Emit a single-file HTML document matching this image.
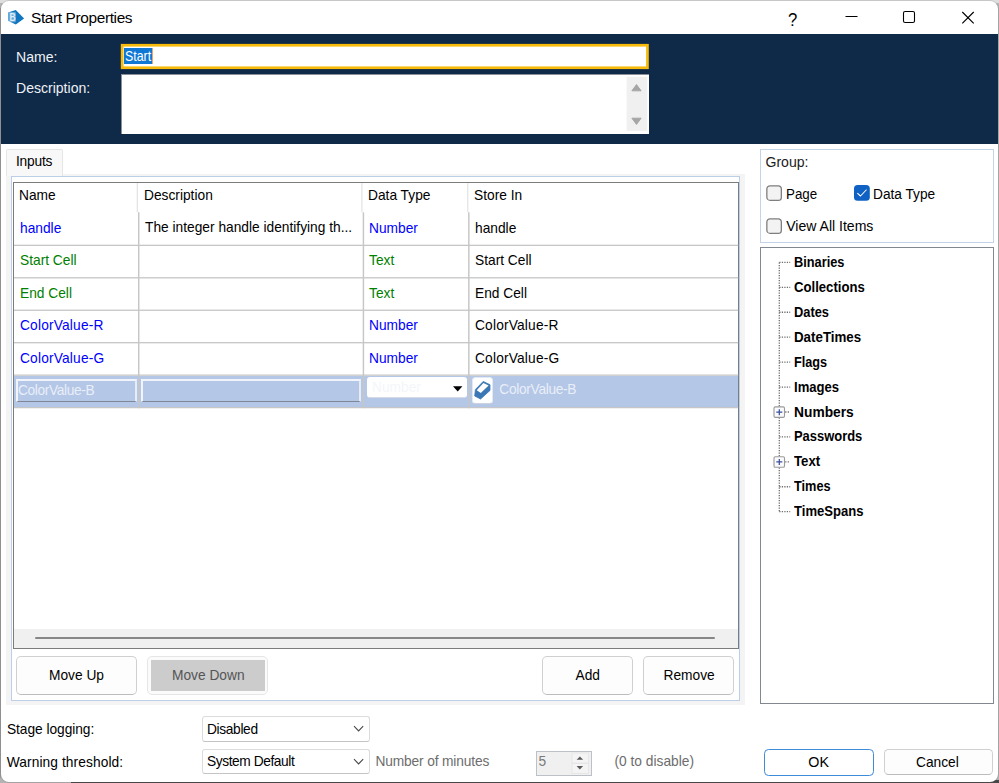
<!DOCTYPE html>
<html><head><meta charset="utf-8"><title>Start Properties</title>
<style>
*{box-sizing:border-box;margin:0;padding:0}
html,body{width:999px;height:783px;overflow:hidden;background:#5a5a5a;font-family:"Liberation Sans",sans-serif;}
#bg{position:absolute;left:0;top:0;width:999px;height:783px;background:linear-gradient(#dedede 0,#dedede 3px,#b4b4b4 3px,#b4b4b4 100%);}
#bg2{position:absolute;left:71px;top:780px;width:928px;height:3px;background:#474747}
#bg3{position:absolute;left:0;top:8px;width:1px;height:770px;background:#9c9c9c}
#win{position:absolute;left:1px;top:1px;width:996.7px;height:781px;background:#fff;border-radius:8px;overflow:hidden;box-shadow:0 0 0 1px rgba(80,80,80,.16);}
.a{position:absolute}
.t{position:absolute;white-space:nowrap;line-height:1;font-size:13.75px;color:#000}
.seg{font-size:14.05px}
.blue{color:#0000ff}.green{color:#008000}
.b{font-weight:bold}
</style></head><body>
<div id="bg"></div><div id="bg2"></div><div id="bg3"></div>
<div id="win">
<!-- coordinates inside #win are page coords minus 1 -->
<div id="c" class="a" style="left:-1px;top:-1px;width:999px;height:783px">

<!-- title bar -->
<svg class="a" style="left:7px;top:9px" width="18" height="17" viewBox="0 0 18 17">
  <path d="M8.8 0.9 L17.1 9.6 L8.8 15.5 L1 11.8 L1 3.4 Z" fill="#0f76bf"/>
  <rect x="1" y="2.9" width="7.9" height="10.4" rx="1" fill="#ffffff" fill-opacity=".36"/>
  <text x="2.6" y="11.8" font-family="Liberation Sans, sans-serif" font-size="10.4" font-weight="bold" fill="#ffffff" fill-opacity=".82" textLength="6.2" lengthAdjust="spacingAndGlyphs">B</text>
</svg>
<div class="t" id="title" style="left:31px;top:9.9px;font-size:15.4px;letter-spacing:-.36px;color:#000">Start Properties</div>
<div class="t" style="left:788px;top:9.6px;font-size:19px;color:#000;transform:scaleX(.88);transform-origin:0 0">?</div>
<svg class="a" style="left:840px;top:6px" width="140" height="24" viewBox="0 0 140 24">
  <path d="M5.5 10.5 H17.5" stroke="#000" stroke-width="1.1" fill="none"/>
  <rect x="63.5" y="5.5" width="11" height="11" rx="1.6" stroke="#000" stroke-width="1.1" fill="none"/>
  <path d="M122.3 6 L133.7 17.4 M133.7 6 L122.3 17.4" stroke="#000" stroke-width="1.15" fill="none"/>
</svg>

<!-- dark header panel -->
<div class="a" style="left:1px;top:34px;width:997px;height:109.5px;background:#0f2a48"></div>
<div class="t seg" style="left:16px;top:50.3px;color:#eef1f5">Name:</div>
<div class="t seg" style="left:16px;top:80.6px;color:#eef1f5">Description:</div>
<svg class="a" style="left:119px;top:43px" width="531" height="27" viewBox="0 0 531 27"><rect x="3.15" y="2.25" width="525.3" height="22.5" fill="#fff" stroke="#f8bb0b" stroke-width="2.7"/></svg>
<div class="a" style="left:124.3px;top:47.7px;width:27.8px;height:16px;background:#0f78d4"></div>
<div class="a" style="left:152px;top:48px;width:1px;height:15.6px;background:#eda36a"></div>
<div class="t" style="left:125.2px;top:50.2px;color:#fff;transform-origin:0 0;transform:scaleX(.9)">Start</div>
<div class="a" style="left:121px;top:74px;width:528px;height:59.7px;background:#fff;border-left:1px solid #8a8f98;border-top:1px solid #8a8f98"></div>
<svg class="a" style="left:626px;top:76px" width="22" height="56" viewBox="0 0 22 56">
  <rect x=".6" y=".7" width="20.6" height="54.2" fill="#f0f0f0"/>
  <path d="M5.9 14.8 L10.5 8.6 L15.1 14.8 Z" fill="#a6a6a6" stroke="#a6a6a6" stroke-width="1" stroke-linejoin="round"/>
  <path d="M5.9 42.2 L10.5 48.4 L15.1 42.2 Z" fill="#a6a6a6" stroke="#a6a6a6" stroke-width="1" stroke-linejoin="round"/>
</svg>

<!-- tab control -->
<div class="a" style="left:6.3px;top:173.6px;width:738.4px;height:531.4px;background:#f4f4f4"></div>
<div class="a" style="left:62px;top:149px;width:683px;height:24.6px;background:#fff"></div>
<div class="a" style="left:11px;top:176.2px;width:729.2px;height:525px;background:#fff;border:1.25px solid #bccfe9"></div>
<div class="a" style="left:6.4px;top:149px;width:56.2px;height:27.4px;background:#f8f8f8;border:1px solid #e6e6e6;border-bottom:none;border-radius:2px 2px 0 0"></div>
<div class="t" style="left:16px;top:154.8px;letter-spacing:-.2px">Inputs</div>

<!-- list view -->
<div id="lv" class="a" style="left:12.5px;top:181.5px;width:726.5px;height:467.3px;background:#fff;border:1.5px solid #7c7c7c"></div>
<!-- selected row -->
<div class="a" style="left:14px;top:376px;width:724px;height:31px;background:#b4c7e7"></div>
<!-- grid lines -->
<svg class="a" style="left:0;top:0" width="760" height="420" viewBox="0 0 760 420">
<g fill="#e5e5e5"><rect x="136.7" y="183" width="1.3" height="29.3"/><rect x="361.2" y="183" width="1.3" height="29.3"/><rect x="467.1" y="183" width="1.3" height="29.3"/></g>
<g fill="#c6c6c6"><rect x="138.0" y="212.3" width="1.45" height="195.9"/><rect x="362.7" y="212.3" width="1.45" height="195.9"/><rect x="468.1" y="212.3" width="1.45" height="195.9"/><rect x="14" y="244.7" width="724.2" height="1.3"/><rect x="14" y="277.15" width="724.2" height="1.3"/><rect x="14" y="309.6" width="724.2" height="1.3"/><rect x="14" y="342.05" width="724.2" height="1.3"/><rect x="14" y="374.5" width="724.2" height="1.3"/><rect x="14" y="406.95" width="724.2" height="1.3"/></g>
</svg>

<!-- header text -->
<div class="t" style="left:19px;top:188.5px">Name</div>
<div class="t" style="left:144px;top:188.5px">Description</div>
<div class="t" style="left:368px;top:188.5px">Data Type</div>
<div class="t" style="left:474px;top:188.5px">Store In</div>
<!-- rows -->
<div class="t blue" style="left:20px;top:222.2px">handle</div>
<div class="t" style="left:145px;top:221.2px">The integer handle identifying th...</div>
<div class="t blue" style="left:369px;top:222.2px">Number</div>
<div class="t" style="left:475px;top:222.2px">handle</div>

<div class="t green" style="left:20px;top:254.2px">Start Cell</div>
<div class="t green" style="left:369px;top:254.2px">Text</div>
<div class="t" style="left:475px;top:254.2px">Start Cell</div>

<div class="t green" style="left:20px;top:286.7px">End Cell</div>
<div class="t green" style="left:369px;top:286.7px">Text</div>
<div class="t" style="left:475px;top:286.7px">End Cell</div>

<div class="t blue" style="left:20px;top:319.2px;letter-spacing:.17px">ColorValue-R</div>
<div class="t blue" style="left:369px;top:319.2px">Number</div>
<div class="t" style="left:475px;top:319.2px;letter-spacing:.17px">ColorValue-R</div>

<div class="t blue" style="left:20px;top:351.7px;letter-spacing:.17px">ColorValue-G</div>
<div class="t blue" style="left:369px;top:351.7px">Number</div>
<div class="t" style="left:475px;top:351.7px;letter-spacing:.17px">ColorValue-G</div>

<!-- selected row editors -->
<div class="a" style="left:16px;top:379px;width:120.5px;height:23px;background:#b4c7e7;border:2px solid #f1f4fa;border-bottom:1.6px solid #808898;border-right-color:#e6ebf4"></div>
<div class="t" style="left:18px;top:384px;color:#e9eef8;letter-spacing:-.38px">ColorValue-B</div>
<div class="a" style="left:141px;top:379px;width:219.5px;height:23px;background:#b4c7e7;border:2px solid #f1f4fa;border-bottom:1.6px solid #808898;border-right-color:#e6ebf4"></div>
<div class="a" style="left:366.8px;top:376.6px;width:100.4px;height:21px;background:#fff;border-radius:3px;border-bottom:1px solid #d4dae6"></div>
<div class="t" style="left:372px;top:380.8px;color:#f4f6fa">Number</div>
<svg class="a" style="left:452px;top:385px" width="12" height="8" viewBox="0 0 12 8"><path d="M1 1.2 H10.4 L5.7 6.4 Z" fill="#000"/></svg>
<div class="a" style="left:471.5px;top:377px;width:21.5px;height:26.6px;background:#fff;border-radius:3.5px;border:1px solid #e4e9f1;border-bottom-color:#cdd3de"></div>
<svg class="a" style="left:473px;top:379px" width="19" height="22" viewBox="0 0 19 22">
  <path d="M2.4 10.6 L10.2 2.4 L17 5.7 L17 11.4 L7.6 20 L1.7 17 Z" fill="#3b77b6" stroke="#3b77b6" stroke-width=".8" stroke-linejoin="round"/>
  <path d="M3.7 11.3 L10.4 4 L15.6 6.5 L7.8 14.1 Z" fill="#fff"/>
</svg>
<div class="t" style="left:499.3px;top:382.6px;color:#e9eef8;letter-spacing:-.32px">ColorValue-B</div>

<!-- horizontal scrollbar -->
<div class="a" style="left:14px;top:628.5px;width:724px;height:19.5px;background:#f0f0f0"></div>
<div class="a" style="left:35px;top:637.2px;width:680px;height:2.2px;background:#868686;border-radius:1px"></div>

<!-- buttons -->
<div class="a btn" style="left:16px;top:656px;width:121px;height:38.5px;background:#fdfdfd;border:1px solid #d0d0d0;border-bottom-color:#bcbcbc;border-radius:5px"></div>
<div class="t" style="left:49px;top:668.6px">Move Up</div>
<div class="a" style="left:147px;top:656px;width:121px;height:38.5px;background:#fbfbfb;border:1px solid #e6e6e6;border-radius:5px"></div>
<div class="a" style="left:150.5px;top:659.5px;width:114px;height:31.5px;background:#cccccc"></div>
<div class="t" style="left:172px;top:668.6px;color:#555">Move Down</div>
<div class="a" style="left:542px;top:656px;width:91px;height:38.5px;background:#fdfdfd;border:1px solid #d0d0d0;border-bottom-color:#bcbcbc;border-radius:5px"></div>
<div class="t" style="left:575.5px;top:668.6px">Add</div>
<div class="a" style="left:643px;top:656px;width:91px;height:38.5px;background:#fdfdfd;border:1px solid #d0d0d0;border-bottom-color:#bcbcbc;border-radius:5px"></div>
<div class="t" style="left:663.5px;top:668.6px">Remove</div>

<!-- group box -->
<div class="a" style="left:760px;top:148.5px;width:233.5px;height:94px;background:#fff;border:1px solid #c5d3e8"></div>
<div class="t seg" style="left:765.5px;top:155.4px;color:#1a1a1a">Group:</div>
<svg class="a" style="left:765px;top:184px" width="18" height="18" viewBox="0 0 18 18"><rect x="1.85" y="1.85" width="14.5" height="14.5" rx="3.2" fill="#f3f3f3" stroke="#7e7e7e" stroke-width="1.3"/></svg>
<div class="t seg" style="left:786.2px;top:186.6px;transform-origin:0 0;transform:scaleX(.95)">Page</div>
<svg class="a" style="left:852.7px;top:184.2px" width="18" height="18" viewBox="0 0 18 18"><rect x="1" y="1" width="15.8" height="15.8" rx="3.6" fill="#0f62c4"/><path d="M4.6 9.3 L7.5 12 L13.2 6" fill="none" stroke="#fff" stroke-width="1.05" stroke-linecap="round" stroke-linejoin="round"/></svg>
<div class="t seg" style="left:873.4px;top:186.6px;transform-origin:0 0;transform:scaleX(.975)">Data Type</div>
<svg class="a" style="left:765px;top:216.5px" width="18" height="18" viewBox="0 0 18 18"><rect x="1.85" y="1.85" width="14.5" height="14.5" rx="3.2" fill="#f3f3f3" stroke="#7e7e7e" stroke-width="1.3"/></svg>
<div class="t seg" style="left:786.2px;top:219px">View All Items</div>

<!-- tree -->
<div class="a" style="left:760px;top:247.3px;width:233.5px;height:456.5px;background:#fff;border:1.3px solid #828790"></div>
<svg class="a" style="left:770px;top:255px" width="30" height="270" viewBox="0 0 30 270">
  <g stroke="#6e6e6e" stroke-width="1.3" stroke-dasharray="1.25 1.25" fill="none">
    <path d="M9.3 7.4 V257.3"/>
    <path d="M9.3 7.4 H20.2"/>
    <path d="M9.3 32.33 H20.2"/>
    <path d="M9.3 57.26 H20.2"/>
    <path d="M9.3 82.19 H20.2"/>
    <path d="M9.3 107.12 H20.2"/>
    <path d="M9.3 132.05 H20.2"/>
    <path d="M15.2 156.98 H20.2"/>
    <path d="M9.3 181.91 H20.2"/>
    <path d="M15.2 206.84 H20.2"/>
    <path d="M9.3 231.77 H20.2"/>
    <path d="M9.3 256.7 H20.2"/>
  </g>
  <rect x="4" y="151.88" width="10.5" height="10.5" rx="1.3" fill="#fbfbfb" stroke="#9a9a9a" stroke-width="1.1"/>
  <path d="M6.3 157.13 H12.3 M9.3 154.13 V160.13" stroke="#3a4fa0" stroke-width="1.25"/>
  <rect x="4" y="201.74" width="10.5" height="10.5" rx="1.3" fill="#fbfbfb" stroke="#9a9a9a" stroke-width="1.1"/>
  <path d="M6.3 206.99 H12.3 M9.3 203.99 V209.99" stroke="#3a4fa0" stroke-width="1.25"/>
</svg>
<div id="tree" class="a b" style="left:794px;top:0;font-size:13.2px">
<div class="t b seg" style="left:0;top:255.18px;font-size:14.2px;transform-origin:0 0;transform:scaleX(0.9)">Binaries</div>
<div class="t b seg" style="left:0;top:280.08px;font-size:14.2px;transform-origin:0 0;transform:scaleX(0.925)">Collections</div>
<div class="t b seg" style="left:0;top:304.98px;font-size:14.2px;transform-origin:0 0;transform:scaleX(0.905)">Dates</div>
<div class="t b seg" style="left:0;top:329.88px;font-size:14.2px;transform-origin:0 0;transform:scaleX(0.939)">DateTimes</div>
<div class="t b seg" style="left:0;top:354.78px;font-size:14.2px;transform-origin:0 0;transform:scaleX(0.895)">Flags</div>
<div class="t b seg" style="left:0;top:379.68px;font-size:14.2px;transform-origin:0 0;transform:scaleX(0.922)">Images</div>
<div class="t b seg" style="left:0;top:404.58px;font-size:14.2px;transform-origin:0 0;transform:scaleX(0.972)">Numbers</div>
<div class="t b seg" style="left:0;top:429.48px;font-size:14.2px;transform-origin:0 0;transform:scaleX(0.911)">Passwords</div>
<div class="t b seg" style="left:0;top:454.38px;font-size:14.2px;transform-origin:0 0;transform:scaleX(0.931)">Text</div>
<div class="t b seg" style="left:0;top:479.28px;font-size:14.2px;transform-origin:0 0;transform:scaleX(0.898)">Times</div>
<div class="t b seg" style="left:0;top:504.18px;font-size:14.2px;transform-origin:0 0;transform:scaleX(0.921)">TimeSpans</div>
</div>

<!-- bottom controls -->
<div class="t" style="left:6.9px;top:723px;letter-spacing:-.04px">Stage logging:</div>
<div class="t" style="left:6.7px;top:755.7px;letter-spacing:.09px">Warning threshold:</div>
<div class="a" style="left:202px;top:716.3px;width:167.5px;height:25.5px;background:#fff;border:1px solid #dcdcdc;border-bottom-color:#c4c4c4;border-radius:3px"></div>
<div class="t" style="left:207px;top:722.8px;letter-spacing:-.35px">Disabled</div>
<svg class="a" style="left:352px;top:724px" width="14" height="10" viewBox="0 0 14 10"><path d="M2 2.2 L6.6 7 L11.2 2.2" fill="none" stroke="#4a4a4a" stroke-width="1.1"/></svg>
<div class="a" style="left:202px;top:748.8px;width:167.5px;height:25.5px;background:#fff;border:1px solid #dcdcdc;border-bottom-color:#c4c4c4;border-radius:3px"></div>
<div class="t" style="left:207px;top:755.3px;letter-spacing:-.42px">System Default</div>
<svg class="a" style="left:352px;top:756.5px" width="14" height="10" viewBox="0 0 14 10"><path d="M2 2.2 L6.6 7 L11.2 2.2" fill="none" stroke="#4a4a4a" stroke-width="1.1"/></svg>
<div class="t" style="left:375.5px;top:755.2px;color:#6d6d6d;letter-spacing:-.15px">Number of minutes</div>
<div class="a" style="left:535.5px;top:750.5px;width:56px;height:25px;background:#f0f0f0;border:1.4px solid #bcc0c7"></div>
<div class="t" style="left:538.5px;top:755.2px;color:#7a7a7a">5</div>
<svg class="a" style="left:571px;top:751.5px" width="19" height="23" viewBox="0 0 19 23">
  <rect x="1" y="1" width="16.5" height="20.3" fill="#f4f4f4" stroke="#e3e3e3" stroke-width=".8"/>
  <path d="M1 11.2 H17.5" stroke="#e0e0e0" stroke-width="1"/>
  <path d="M5.6 7.7 L8.85 4.4 L12.1 7.7 Z" fill="#5a5a5a"/>
  <path d="M5.6 14.1 L8.85 17.6 L12.1 14.1 Z" fill="#5a5a5a"/>
</svg>
<div class="t" style="left:614.5px;top:755.2px;color:#6d6d6d">(0 to disable)</div>

<div class="a" style="left:763.6px;top:749px;width:110px;height:26.8px;background:#fff;border:1.7px solid #3d8bd9;border-radius:4.5px"></div>
<div class="t" style="left:808.3px;top:755.4px;font-size:14.3px">OK</div>
<div class="a" style="left:883.6px;top:749.4px;width:109.3px;height:26px;background:#fdfdfd;border:1px solid #d0d0d0;border-bottom-color:#bcbcbc;border-radius:4.5px"></div>
<div class="t" style="left:916px;top:755.5px">Cancel</div>

</div>
</div>
</body></html>
